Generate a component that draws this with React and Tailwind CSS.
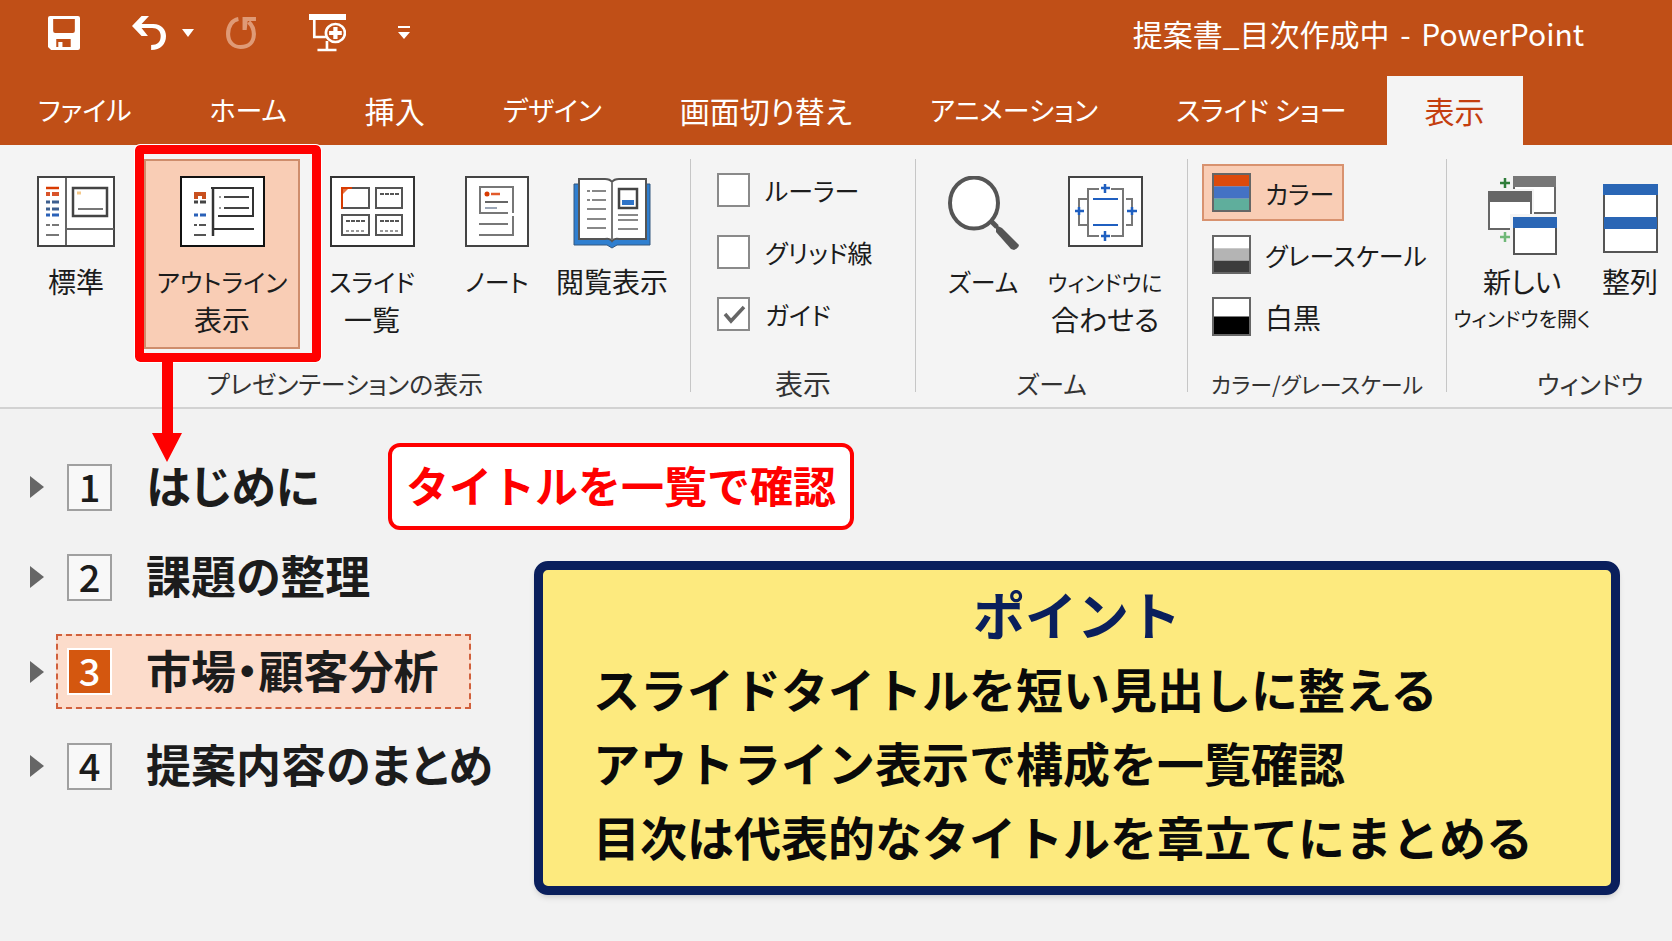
import { useState } from 'react';

const tabs = ['ファイル', 'ホーム', '挿入', 'デザイン', '画面切り替え', 'アニメーション', 'スライド ショー', '表示'];

const outline = ['はじめに', '課題の整理', '市場・顧客分析', '提案内容のまとめ'];

const points = [
    'スライドタイトルを短い見出しに整える',
    'アウトライン表示で構成を一覧確認',
    '目次は代表的なタイトルを章立てにまとめる',
];

const hasKatakana = (text) => /[ァ-ヶ]/.test(text);

const labelSize = (text) => {
    if (!hasKatakana(text)) return 'text-[28px]';
    if (text.includes('を')) return 'text-[20px]';
    if (text.includes('/') || text.includes('に')) return 'text-[22px]';
    return 'text-[25px]';
};

/* Quick access icons */
const SaveIcon = () => (
    <svg width="32" height="34" viewBox="0 0 31 34" preserveAspectRatio="none">
        <path fill="#fff" fillRule="evenodd" d="M2 0H29Q31 0 31 2V32Q31 34 29 34H3L0 31V2Q0 0 2 0ZM5 3V15Q5 17 7 17H24Q26 17 26 15V3ZM8 23V31H10V26H14V31H22V23Z" />
    </svg>
);

const UndoIcon = () => (
    <svg width="34" height="34" viewBox="0 0 32 34" preserveAspectRatio="none" fill="none">
        <path d="M9 0H16L9 8H20C28 8 32 14 32 20C32 28 27 34 18 34V29C24 29 27 26 27 20C27 15 24 12 19 12H9L15 20H9L0 10Z" fill="#fff" />
    </svg>
);

const RedoIcon = () => (
    <svg width="31" height="34" viewBox="0 0 30 34" preserveAspectRatio="none" fill="none">
        <path d="M12 3C6 4 2 10 2 18C2 26 7 31 14 31C22 31 27 26 27 18C27 13 25 9 22 6" stroke="#df9a76" strokeWidth="4" />
        <path d="M16 1H29V5H21L20 14H16Z" fill="#df9a76" />
    </svg>
);

const PresentIcon = () => (
    <svg width="37" height="38" viewBox="0 0 35 38" preserveAspectRatio="none" fill="none">
        <path d="M0 0H35V6H0Z" fill="#fff" />
        <path d="M5 6V23H16M17 27V35M8 36H26" stroke="#fff" strokeWidth="2.5" />
        <circle cx="25" cy="19" r="9" fill="#c04f17" stroke="#fff" strokeWidth="2.5" />
        <path d="M25 13V25M19 19H31" stroke="#fff" strokeWidth="4" />
    </svg>
);

/* Ribbon icons */
const NormalIcon = () => (
    <svg width="78" height="71" viewBox="0 0 78 71" fill="none">
        <path d="M1 1H77V70H1Z" fill="#fff" stroke="#444" strokeWidth="2" />
        <path d="M29 2V69M30 53H77" stroke="#666" strokeWidth="2" />
        <path d="M36 12H70V40H36Z" stroke="#444" strokeWidth="2.5" />
        <path d="M41 33H66" stroke="#777" strokeWidth="2" />
        <path d="M40 17H44" stroke="#f5c98a" strokeWidth="3" />
        <path d="M9 12H22" stroke="#d83b01" strokeWidth="2.5" />
        <path d="M9 18H13M15 18H22" stroke="#d9542a" strokeWidth="4" />
        <path d="M9 26H13M15 26H22M9 33H13M15 33H22" stroke="#3d5f8f" strokeWidth="3" />
        <path d="M9 39H13M15 39H22" stroke="#2a61b8" strokeWidth="3" />
        <path d="M9 49H13M15 49H22M9 59H22" stroke="#777" strokeWidth="2" />
    </svg>
);

const OutlineIcon = () => (
    <svg width="85" height="71" viewBox="0 0 85 71" fill="none">
        <path d="M1 1H84V70H1Z" fill="#fff" stroke="#111" strokeWidth="2" />
        <path d="M33 11V60" stroke="#333" strokeWidth="2.5" />
        <path d="M31 12H73V40H38M34 53H74" stroke="#333" strokeWidth="2" />
        <path d="M44 21H69M44 32H69" stroke="#444" strokeWidth="2" />
        <path d="M39 21H41M39 32H41" stroke="#999" strokeWidth="2" />
        <path d="M14 16H26V23H22V20H18V23H14Z" fill="#c8501e" />
        <path d="M14 26H18M20 26H26" stroke="#444" strokeWidth="3" />
        <path d="M14 39H18M20 39H26" stroke="#2a61b8" strokeWidth="3" />
        <path d="M14 49H17M19 49H26M14 59H26" stroke="#555" strokeWidth="2" />
    </svg>
);

const SorterIcon = () => (
    <svg width="85" height="71" viewBox="0 0 85 71" fill="none">
        <path d="M1 1H84V70H1Z" fill="#fff" stroke="#333" strokeWidth="2" />
        <path d="M12 12H39V32H12ZM46 12H72V32H46ZM12 39H39V59H12ZM46 39H72V59H46Z" stroke="#555" strokeWidth="2" />
        <path d="M12 33V12H22" stroke="#d83b01" strokeWidth="2" />
        <path d="M13 13H18L13 18Z" fill="#e8703f" />
        <path d="M50 18H69M16 45H36M50 45H69" stroke="#555" strokeWidth="2" strokeDasharray="4 1" />
        <path d="M16 55H36M50 55H69" stroke="#999" strokeWidth="2" strokeDasharray="3 2" />
    </svg>
);

const NotesIcon = () => (
    <svg width="64" height="71" viewBox="0 0 64 71" fill="none">
        <path d="M1 1H63V70H1Z" fill="#fff" stroke="#444" strokeWidth="2" />
        <path d="M43 37H15V11H48V37M48 40V59H14M14 48H43" stroke="#777" strokeWidth="2" />
        <circle cx="22" cy="18" r="2.5" fill="#d83b01" />
        <path d="M26 18H35" stroke="#e25a2a" strokeWidth="2.5" />
        <path d="M20 26H43" stroke="#666" strokeWidth="2" />
        <path d="M20 32H32" stroke="#9aa5b5" strokeWidth="2" />
    </svg>
);

const ReadingIcon = () => (
    <svg width="78" height="73" viewBox="0 0 78 73" fill="none">
        <path d="M1 8H77V69H44L39 72L34 69H1Z" fill="#2f7fd0" stroke="#35597f" />
        <path d="M6 3H32Q37 3 39 6Q41 3 46 3H73V63H46Q41 62 39 65Q37 62 32 63H6Z" fill="#fff" stroke="#555" strokeWidth="2" />
        <path d="M39 6V64" stroke="#777" strokeWidth="2" />
        <path d="M14 15H17M19 15H33M14 24H17M19 24H33M14 33H33M14 43H33M14 52H33M45 39H65M45 44H65M45 53H65" stroke="#888" strokeWidth="2" />
        <path d="M46 13H64V32H46Z" fill="#fff" stroke="#444" strokeWidth="2.5" />
        <path d="M49 24H61V29H49Z" fill="#2f74c8" />
    </svg>
);

const ZoomIcon = () => (
    <svg width="71" height="74" viewBox="0 0 71 74" fill="none">
        <path d="M43 45L49 51" stroke="#555" strokeWidth="5" />
        <path d="M48 49L54 52L71 69Q71 72 66 74L63 73L48 56Z" fill="#555" />
        <ellipse cx="26" cy="27" rx="24" ry="25.5" fill="#fff" stroke="#555" strokeWidth="4" />
    </svg>
);

const FitIcon = () => (
    <svg width="75" height="71" viewBox="0 0 75 71" fill="none">
        <path d="M1 1H74V70H1Z" fill="#fff" stroke="#444" strokeWidth="2" />
        <path d="M31 13H20V60H31M43 13H55V60H43M20 23H11V31M11 39V49H20M58 23H64V31M64 39V49H58" stroke="#777" strokeWidth="2" />
        <path d="M25 23H50M25 49H50" stroke="#1f5fc0" strokeWidth="2" />
        <path d="M33 12H42M37 8V17M33 60H42M37 55V65M7 35H16M11 31V39M59 35H69M64 31V39" stroke="#1f5fc0" strokeWidth="2.5" />
    </svg>
);

const NewWindowIcon = () => (
    <svg width="70" height="79" viewBox="0 0 70 79" fill="none">
        <path d="M27 1H68V37H27Z" fill="#fff" stroke="#666" strokeWidth="2" />
        <path d="M26 0H69V11H26Z" fill="#777" />
        <path d="M-1 13H47V56H-1Z" fill="#f4f4f4" />
        <path d="M2 16H44V53H2Z" fill="#fff" stroke="#666" strokeWidth="2" />
        <path d="M1 15H45V26H1Z" fill="#666" />
        <path d="M23 38H70V79H23Z" fill="#f4f4f4" />
        <path d="M27 42H69V78H27Z" fill="#fff" stroke="#555" strokeWidth="2" />
        <path d="M26 41H70V52H26Z" fill="#2a66b5" />
        <path d="M13 7H23M18 2V12" stroke="#2f7d3a" strokeWidth="2.5" />
        <path d="M13 61H23M18 56V66" stroke="#6fb878" strokeWidth="2.5" />
    </svg>
);

const ArrangeIcon = () => (
    <svg width="55" height="78" viewBox="0 0 55 78" fill="none">
        <path d="M1 9H54V76H1Z" fill="#fff" stroke="#555" strokeWidth="2" />
        <path d="M0 8H55V19H0ZM1 41H54V53H1Z" fill="#2a66b5" />
    </svg>
);

const Swatch = ({ colors }) => (
    <svg className="shrink-0" width="39" height="39" viewBox="0 0 39 39">
        {colors.map((c, i) => (
            <rect key={c} x="1" width="37" y={1 + (37 / colors.length) * i} height={37 / colors.length} fill={c} />
        ))}
        <path d="M1 1H38V38H1Z" fill="none" stroke="#666" strokeWidth="2" />
    </svg>
);

const RibbonButton = ({ icon, lines, className }) => (
    <button type="button" className={`flex h-[190px] flex-col items-center whitespace-nowrap pt-[17px] ${className}`}>
        <span className="flex h-[74px] items-start justify-center">{icon}</span>
        <span className="mt-3 flex flex-col items-center">
            {lines.map((line) => (
                <span key={line} className={labelSize(line)}>{line}</span>
            ))}
        </span>
    </button>
);

const Group = ({ label, className, children }) => (
    <section className={`flex flex-col pt-[14px] ${className}`}>
        <div className="flex">{children}</div>
        <h2 className={`mt-auto whitespace-nowrap pb-[5px] text-center text-[#333] ${labelSize(label)}`}>{label}</h2>
    </section>
);

const Divider = () => <div className="mt-[14px] h-[233px] w-px shrink-0 bg-[#c6c6c6]" />;

const CheckRow = ({ label, checked, onChange }) => (
    <label className="flex items-center gap-[15px] whitespace-nowrap text-[25px]">
        <span className="relative flex">
            <input
                type="checkbox"
                checked={checked}
                onChange={onChange}
                className="h-[34px] w-[33px] appearance-none border-2 border-[#8a8a8a] bg-white"
            />
            {checked && (
                <svg className="pointer-events-none absolute inset-0" width="33" height="34" viewBox="0 0 33 34" fill="none">
                    <path d="M8 17L14 24L27 10" stroke="#666" strokeWidth="3.5" />
                </svg>
            )}
        </span>
        {label}
    </label>
);

export default function App() {
    const [activeTab, setActiveTab] = useState('表示');
    const [selected, setSelected] = useState(2);
    const [show, setShow] = useState({ ルーラー: false, グリッド線: false, ガイド: true });

    return (
        <div className="min-h-screen overflow-x-hidden bg-[#f2f2f2] font-['Noto_Sans_CJK_JP',sans-serif] text-[#1c1c1c]">
            {/* Title bar and tabs */}
            <header className="bg-[#c04f17] text-white">
                <div className="flex h-[76px] items-center pb-[10px] pl-12 pr-[88px]">
                    <button type="button" aria-label="save"><SaveIcon /></button>
                    <button type="button" aria-label="undo" className="ml-[52px] flex items-center gap-4">
                        <UndoIcon />
                        <svg width="12" height="8" viewBox="0 0 12 8"><path d="M0 0H12L6 8Z" fill="#fff" /></svg>
                    </button>
                    <button type="button" aria-label="redo" className="ml-8"><RedoIcon /></button>
                    <button type="button" aria-label="present" className="ml-[52px]"><PresentIcon /></button>
                    <button type="button" aria-label="more" className="ml-[52px]">
                        <svg width="12" height="14" viewBox="0 0 12 14"><path d="M0 0H12V2H0ZM0 6H12L6 13Z" fill="#fff" /></svg>
                    </button>
                    <h1 className="ml-auto whitespace-nowrap text-[30px] [font-feature-settings:'palt']">
                        提案書_目次作成中<span className="px-1"> - </span>PowerPoint
                    </h1>
                </div>
                <nav className="flex h-[69px] gap-[2px] whitespace-nowrap [font-feature-settings:'palt']">
                    {tabs.map((tab) => (
                        <button
                            key={tab}
                            type="button"
                            onClick={() => setActiveTab(tab)}
                            className={`px-[38px] ${hasKatakana(tab) ? 'text-[27px]' : 'text-[30px]'} ${tab === activeTab ? 'bg-[#f4f4f4] text-[#c43e0e]' : ''}`}
                        >
                            {tab}
                        </button>
                    ))}
                </nav>
            </header>

            {/* Ribbon */}
            <div className="flex h-[264px] border-b-2 border-[#d2d2d2] bg-[#f4f4f4] leading-[38px] [font-feature-settings:'palt']">
                <Group label="プレゼンテーションの表示" className="w-[690px] shrink-0">
                    <RibbonButton icon={<NormalIcon />} lines={['標準']} className="ml-2 w-[136px]" />
                    <div className="relative">
                        <RibbonButton icon={<OutlineIcon />} lines={['アウトライン', '表示']} className="w-[156px] bg-[#f9cdb5] outline-2 -outline-offset-2 outline-[#cf8d6c]" />
                        <div className="pointer-events-none absolute -left-[9px] -top-[14px] z-10 h-[217px] w-[186px] rounded-[5px] border-9 border-[#ff0000] outline outline-white" />
                        <svg className="pointer-events-none absolute left-[8px] top-[202px] z-10" width="30" height="101" viewBox="0 0 30 101">
                            <path d="M10 0H21V72H30L15 101L0 72H10Z" fill="#ff0000" />
                        </svg>
                    </div>
                    <RibbonButton icon={<SorterIcon />} lines={['スライド', '一覧']} className="w-[144px]" />
                    <RibbonButton icon={<NotesIcon />} lines={['ノート']} className="w-[106px]" />
                    <RibbonButton icon={<ReadingIcon />} lines={['閲覧表示']} className="w-[124px]" />
                </Group>
                <Divider />
                <Group label="表示" className="w-[224px] shrink-0">
                    <div className="flex flex-col gap-6 pl-[26px] pt-3">
                        {Object.keys(show).map((name) => (
                            <CheckRow
                                key={name}
                                label={name}
                                checked={show[name]}
                                onChange={() => setShow({ ...show, [name]: !show[name] })}
                            />
                        ))}
                    </div>
                </Group>
                <Divider />
                <Group label="ズーム" className="w-[271px] shrink-0">
                    <RibbonButton icon={<ZoomIcon />} lines={['ズーム']} className="ml-5 w-[94px]" />
                    <RibbonButton icon={<FitIcon />} lines={['ウィンドウに', '合わせる']} className="w-[150px]" />
                </Group>
                <Divider />
                <Group label="カラー/グレースケール" className="w-[258px] shrink-0">
                    <div className="flex flex-col items-start whitespace-nowrap pl-[14px] pt-[5px]">
                        <button type="button" className="flex h-[57px] items-center gap-[14px] border-2 border-[#d8926f] bg-[#f9cdb5] px-2 text-[25px]">
                            <Swatch colors={['#dc4a0c', '#4472c4', '#5fae9c']} />カラー
                        </button>
                        <button type="button" className="flex h-[67px] items-center gap-[14px] px-[10px] text-[25px]">
                            <Swatch colors={['#ffffff', '#b4b4b4', '#3c3c3c']} />グレースケール
                        </button>
                        <button type="button" className="flex h-[57px] items-center gap-[14px] px-[10px] text-[28px]">
                            <Swatch colors={['#ffffff', '#000000']} />白黒
                        </button>
                    </div>
                </Group>
                <Divider />
                <Group label="ウィンドウ" className="min-w-[286px] flex-1">
                    <RibbonButton icon={<NewWindowIcon />} lines={['新しい', 'ウィンドウを開く']} className="w-[150px]" />
                    <RibbonButton icon={<ArrangeIcon />} lines={['整列']} className="w-[66px]" />
                </Group>
            </div>

            {/* Outline pane */}
            <main className="relative flex">
                <ol className="w-[534px] shrink-0 pt-[33px] text-[45px] font-bold [font-feature-settings:'palt']">
                    {outline.map((title, i) => (
                        <li key={title} className="flex items-center pl-[30px]">
                            <svg width="14" height="22" viewBox="0 0 14 22"><path d="M0 0L14 11L0 22Z" fill="#666" /></svg>
                            <button
                                type="button"
                                onClick={() => setSelected(i)}
                                className={`ml-3 flex items-center gap-[34px] whitespace-nowrap border-2 border-dashed pl-[9px] pr-[30px] ${i === selected
                                        ? 'my-3 h-[75px] border-[#d0603c] bg-[#fcdccb]'
                                        : 'h-[90px] border-transparent'
                                    }`}
                            >
                                <span
                                    className={`flex h-[47px] w-[45px] items-center justify-center border-2 pb-1 text-[38px] font-medium ${i === selected
                                            ? 'border-white bg-[#d4570f] text-white'
                                            : 'border-[#a0a0a0] bg-[#f8f8f8]'
                                        }`}
                                >
                                    {i + 1}
                                </span>
                                <span className="pb-1">{title}</span>
                            </button>
                        </li>
                    ))}
                </ol>

                {/* Callout beside the first heading */}
                <p className="absolute left-[388px] top-[34px] flex h-[87px] items-center whitespace-nowrap rounded-xl border-4 border-[#ff0000] bg-white px-[14px] pb-1 text-[43px] font-bold text-[#ff0000]">
                    タイトルを一覧で確認
                </p>

                {/* Key points */}
                <aside className="mb-[46px] mr-[52px] mt-[152px] flex-1 whitespace-nowrap rounded-[14px] border-9 border-[#0a1f5c] bg-[#fdea7e] px-[50px] pb-[13px] pt-[7px] text-[47px] font-bold leading-[74px] text-[#0a0a0a] shadow-md">
                    <h2 className="text-center text-[52px] text-[#0a1f5c]">ポイント</h2>
                    {points.map((point) => (
                        <p key={point}>{point}</p>
                    ))}
                </aside>
            </main>
        </div>
    );
}
